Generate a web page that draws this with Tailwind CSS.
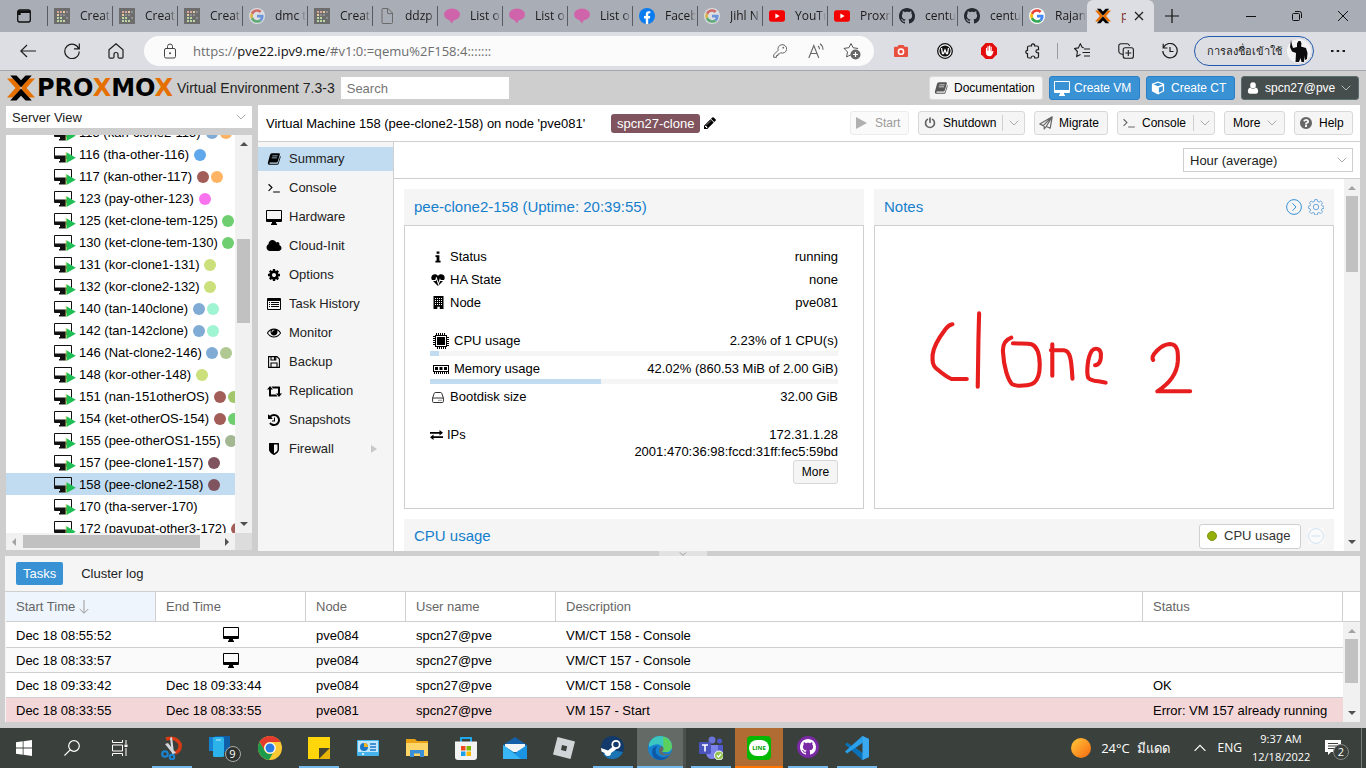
<!DOCTYPE html>
<html lang="en">
<head>
<meta charset="utf-8">
<meta name="viewport" content="width=device-width, initial-scale=1">
<title>pve081 - Proxmox Virtual Environment</title>
<script src="https://cdn.jsdelivr.net/npm/@tailwindcss/browser@4"></script>
</head>
<body class="flex h-screen flex-col overflow-hidden bg-[#cecece] font-['Liberation_Sans',Arial,sans-serif] text-[13px] leading-4 text-black">

<svg class="hidden" aria-hidden="true">
  <symbol id="i-grid" viewBox="0 0 16 16"><rect width="16" height="16" fill="#6d6d6d"/><path fill="#d9a79a" d="M3 3h2v2H3zM6 3h2v2H6z"/><path fill="#e8c9a0" d="M9 3h2v2H9zM3 6h2v2H3z"/><path fill="#b9d8a2" d="M3 9h2v2H3zM6 9h2v2H6zM3 12h2v2H3zM6 12h2v2H6zM9 12h2v2H9z"/><path fill="#8e8e8e" d="M12 3h2v2h-2zM6 6h2v2H6zM9 6h2v2H9zM12 9h2v2h-2z"/></symbol>
  <symbol id="i-google" viewBox="-4 -4 56 56"><circle cx="24" cy="24" r="28" fill="#fff"/><path fill="#EA4335" d="M24 9.500c3.540 0 6.710 1.220 9.210 3.600l6.850-6.850C35.900 2.380 30.470 0 24 0 14.620 0 6.510 5.380 2.560 13.220l7.980 6.190C12.430 13.720 17.740 9.500 24 9.500z"/><path fill="#4285F4" d="M46.980 24.550c0-1.570-.15-3.090-.38-4.550H24v9.020h12.940c-.58 2.960-2.260 5.480-4.780 7.180l7.730 6c4.510-4.180 7.090-10.360 7.090-17.650z"/><path fill="#FBBC05" d="M10.530 28.590c-.48-1.450-.76-2.990-.76-4.590s.27-3.140.76-4.590l-7.980-6.190C.92 16.460 0 20.120 0 24c0 3.880.92 7.540 2.560 10.780l7.970-6.190z"/><path fill="#34A853" d="M24 48c6.480 0 11.930-2.130 15.890-5.810l-7.730-6c-2.150 1.450-4.920 2.300-8.160 2.300-6.260 0-11.570-4.220-13.470-9.910l-7.980 6.190C6.510 42.620 14.620 48 24 48z"/></symbol>
  <symbol id="i-doc" viewBox="0 0 16 16"><path fill="none" stroke="#6b6b6b" d="M3 1.500q0-1 1-1h5l4.500 4.500v9.500q0 1-1 1H4q-1 0-1-1zM8.500.5V5q0 .6.600.6h4.400"/></symbol>
  <symbol id="i-bubble" viewBox="0 0 16 16"><ellipse cx="8" cy="6.500" rx="8" ry="6" fill="#cf64ab"/><path fill="#cf64ab" d="M4 10.500l4 5 2-4z"/></symbol>
  <symbol id="i-fb" viewBox="0 0 16 16"><circle cx="8" cy="8" r="8" fill="#0a7cf0"/><path fill="#fff" d="M6.800 16v-5.600H5V8h1.800V6.300c0-2 1.200-3.100 3-3.100.8 0 1.500.1 1.500.1v2h-.9c-.9 0-1.200.5-1.200 1.100V8h2l-.3 2.400H9.200V16z"/></symbol>
  <symbol id="i-yt" viewBox="0 0 16 16"><rect y="2.300" width="16" height="11.400" rx="2.600" fill="#f50000"/><path fill="#fff" d="M6.400 5.600v4.800L10.600 8z"/></symbol>
  <symbol id="i-gh" viewBox="0 0 16 16"><path fill="currentColor" d="M8 0C3.580 0 0 3.580 0 8c0 3.540 2.290 6.530 5.470 7.590.4.070.55-.17.55-.38 0-.19-.01-.82-.01-1.490-2.010.37-2.530-.49-2.690-.94-.09-.23-.48-.94-.82-1.130-.28-.15-.68-.52-.01-.53.63-.01 1.080.58 1.230.82.72 1.210 1.870.87 2.330.66.07-.52.28-.87.51-1.070-1.780-.2-3.640-.89-3.640-3.950 0-.87.31-1.590.82-2.150-.08-.2-.36-1.020.08-2.120 0 0 .67-.21 2.200.82.64-.18 1.320-.27 2-.27s1.360.09 2 .27c1.530-1.040 2.200-.82 2.200-.82.44 1.100.16 1.920.08 2.120.51.56.82 1.270.82 2.150 0 3.070-1.870 3.750-3.650 3.950.29.25.54.73.54 1.480 0 1.070-.01 1.930-.01 2.200 0 .21.15.46.55.38A8.010 8.010 0 0016 8c0-4.420-3.580-8-8-8z"/></symbol>
  <symbol id="i-px" viewBox="0 0 28 26"><path fill="#e57000" d="M0 3.500h6L15.300 13 6 22.500H0L8.500 13zM28 3.500h-6L12.700 13l9.300 9.500h6L19.500 13z"/><path fill="#000" d="M3.200.5h6.300L14 5.300 18.500.5h6.300L14 12.300zM14 13.700l10.800 11.800h-6.300L14 20.700l-4.500 4.800H3.200z"/></symbol>
  <symbol id="i-desktop" viewBox="0 0 16 15"><path fill="currentColor" fill-rule="evenodd" d="M1 0h14q1 0 1 1v10q0 1-1 1H10v1.500h1V15H5v-1.500h1V12H1q-1 0-1-1V1q0-1 1-1zM1 1v8h14V1z"/></symbol>
  <symbol id="i-vm" viewBox="0 0 22 18"><path fill="#111" fill-rule="evenodd" d="M1 1h16q1 0 1 1v10q0 1-1 1h-5v3.500H5V15h1v-2H1q-1 0-1-1V2q0-1 1-1zM1 2v7.500h16V2z"/><path fill="#e6d66a" d="M11.600 6v11l1-.5V6.500z"/><path fill="#1fbf55" d="M12.500 6.200l9.300 5.500-9.300 5.300z"/></symbol>
  <symbol id="i-chev" viewBox="0 0 10 6"><path fill="none" stroke="currentColor" d="M.7.700L5 5 9.300.7"/></symbol>
  <symbol id="i-book" viewBox="0 0 16 14"><path fill="currentColor" fill-rule="evenodd" d="M5.500.3h8.200q1.500 0 1.100 1.400L12.400 10q-.3 1-1.400 1H3.200q-.9 0-.7.8.2.600 1 .600h8.300q.7 0 .9-.7l2.500-8.200q.8.500.5 1.400L13.400 12.600q-.4 1.200-1.700 1.200H3.300Q.4 13.600.9 11L3.300 2.200Q3.900.5 5.500.3zM6.200 3l-.3.900h6.200l.3-.9zM5.500 5.200l-.3.900h6.200l.3-.9z"/></symbol>
  <symbol id="i-term" viewBox="0 0 16 12"><path fill="none" stroke="currentColor" stroke-width="1.400" d="M1.500 1.500L5.500 5.500 1.500 9.500M7 10.800h8"/></symbol>
  <symbol id="i-cube" viewBox="0 0 16 16"><path fill="currentColor" fill-rule="evenodd" d="M8 .5l7 2.700v8.600L8 15.500l-7-3.700V3.200zM8 2L3 4l5 2 5-2zM9 7.500v6l4.500-2.300V5.700z"/></symbol>
  <symbol id="i-user" viewBox="0 0 12 14"><path fill="currentColor" d="M6 .3a3.300 3.300 0 013.300 3.400A3.300 3.300 0 016 7.200a3.300 3.300 0 01-3.300-3.500A3.300 3.300 0 016 .3zM3 6.500q1.300 1.500 3 1.500t3-1.500q3 .6 3 4.700 0 2.500-2.200 2.500H2.200Q0 13.700 0 11.200 0 7.100 3 6.500z"/></symbol>
  <symbol id="i-power" viewBox="0 0 14 14"><path fill="none" stroke="currentColor" stroke-width="2" stroke-linecap="round" d="M4 2.800a5.200 5.200 0 106 0M7 1.200v5"/></symbol>
  <symbol id="i-plane" viewBox="0 0 14 14"><path fill="none" stroke="currentColor" stroke-width="1.200" stroke-linejoin="round" d="M13.200.8L.8 8l3.400 1.600L13.200.8l-2 11.400-4-1.700-2 2.500V10M13.200.8L7.200 10.500"/></symbol>
  <symbol id="i-help" viewBox="128 128 1536 1536"><path fill="currentColor" d="M1024 1376v-192q0-14-9-23t-23-9h-192q-14 0-23 9t-9 23v192q0 14 9 23t23 9h192q14 0 23-9t9-23zm256-672q0-88-55.500-163t-138.500-116-170-41q-243 0-371 213-15 24 8 42l132 100q7 6 19 6 16 0 25-12 53-68 86-92 34-24 86-24 48 0 85.500 26t37.500 59q0 38-20 61t-68 45q-63 28-115.500 86.500t-52.500 125.500v36q0 14 9 23t23 9h192q14 0 23-9t9-23q0-19 21.500-49.500t54.500-49.500q32-18 49-28.500t46-35 44.500-48 28-60.500 12.500-81zm384 192q0 209-103 385.500t-279.500 279.500-385.500 103-385.500-103-279.500-279.500-103-385.500 103-385.500 279.500-279.500 385.500-103 385.500 103 279.500 279.500 103 385.500z"/></symbol>
  <symbol id="i-pencil" viewBox="128 128 1536 1536"><path fill="currentColor" d="M491 1536l91-91-235-235-91 91v107h128v128h107zm523-928q0-22-22-22-10 0-17 7l-542 542q-7 7-7 17 0 22 22 22 10 0 17-7l542-542q7-7 7-17zm-54-192l416 416-832 832h-416v-416zm683 96q0 53-37 90l-166 166-416-416 166-165q36-38 90-38 53 0 91 38l235 234q37 39 37 91z"/></symbol>
  <symbol id="i-cloud" viewBox="0 128 2048 1536"><path fill="currentColor" d="M1984 1152q0 159-112.500 271.500t-271.500 112.500h-1088q-185 0-316.500-131.500t-131.500-316.500q0-132 71-241.500t187-163.500q-2-28-2-43 0-212 150-362t362-150q158 0 286.500 88t187.500 230q70-62 166-62 106 0 181 75t75 181q0 75-41 138 129 30 213 134.500t84 239.500z"/></symbol>
  <symbol id="i-cog" viewBox="128 128 1536 1536"><path fill="currentColor" d="M1152 896q0-106-75-181t-181-75-181 75-75 181 75 181 181 75 181-75 75-181zm512-109v222q0 12-8 23t-20 13l-185 28q-19 54-39 91 35 50 107 138 10 12 10 25t-9 23q-27 37-99 108t-94 71q-12 0-26-9l-138-108q-44 23-91 38-16 136-29 186-7 28-36 28h-222q-14 0-24.500-8.500t-11.500-21.500l-28-184q-49-16-90-37l-141 107q-10 9-25 9-14 0-25-11-126-114-165-168-7-10-7-23 0-12 8-23 15-21 51-66.500t54-70.500q-27-50-41-99l-183-27q-13-2-21-12.500t-8-23.500v-222q0-12 8-23t19-13l186-28q14-46 39-92-40-57-107-138-10-12-10-24 0-10 9-23 26-36 98.500-107.500t94.500-71.500q13 0 26 10l138 107q44-23 91-38 16-136 29-186 7-28 36-28h222q14 0 24.500 8.500t11.500 21.500l28 184q49 16 90 37l142-107q9-9 24-9 13 0 25 10 129 119 165 170 7 8 7 22 0 12-8 23-15 21-51 66.500t-54 70.500q26 50 41 98l183 28q13 2 21 12.500t8 23.500z"/></symbol>
  <symbol id="i-list" viewBox="0 0 14 12"><path fill="currentColor" fill-rule="evenodd" d="M1 0h12q1 0 1 1v10q0 1-1 1H1q-1 0-1-1V1q0-1 1-1zM1 3v8h12V3zM2 4h1v1H2zM4 4h8v1H4zM2 6h1v1H2zM4 6h8v1H4zM2 8h1v1H2zM4 8h8v1H4z"/></symbol>
  <symbol id="i-eye" viewBox="0 384 1792 1152"><path fill="currentColor" d="M1664 960q-152-236-381-353 61 104 61 225 0 185-131.500 316.500t-316.500 131.500-316.500-131.500-131.500-316.500q0-121 61-225-229 117-381 353 133 205 333.500 326.500t434.500 121.500 434.500-121.500 333.500-326.500zm-720-384q0-20-14-34t-34-14q-125 0-214.500 89.500t-89.500 214.500q0 20 14 34t34 14 34-14 14-34q0-86 61-147t147-61q20 0 34-14t14-34zm848 384q0 34-20 69-140 230-376.500 368.500t-499.500 138.500-499.500-139-376.500-368q-20-35-20-69t20-69q140-229 376.500-368t499.500-139 499.500 139 376.500 368q20 35 20 69z"/></symbol>
  <symbol id="i-save" viewBox="0 0 12 12"><path fill="none" stroke="currentColor" stroke-width="1.100" d="M.6.600H9L11.400 3v8.400H.6zM3 11V7h6v4M3 1v3h4.800V1M6.500 1v2.500"/></symbol>
  <symbol id="i-retweet" viewBox="0 0 15 11"><path fill="currentColor" d="M3 0l3 3.600H4v5h5l1.500 2H2.600Q2 10.600 2 10V3.600H0zM12 11L9 7.400h2v-5H6L4.500.400h7.900Q13 .4 13 1v6.400h2z"/></symbol>
  <symbol id="i-history" viewBox="128 128 1536 1536"><path fill="currentColor" d="M1664 896q0 156-61 298t-164 245-245 164-298 61q-172 0-327-72.500t-264-204.500q-7-10-6.500-22.500t8.500-20.500l137-138q10-9 25-9 16 2 23 12 73 95 179 147t225 52q104 0 198.500-40.500t163.500-109.500 109.500-163.500 40.500-198.500-40.500-198.500-109.500-163.500-163.500-109.500-198.500-40.500q-98 0-188 35.500t-160 101.500l137 138q31 30 14 69-17 40-59 40h-448q-26 0-45-19t-19-45v-448q0-42 40-59 39-17 69 14l130 129q107-101 244.500-156.500t284.500-55.500q156 0 298 61t245 164 164 245 61 298zm-640-288v448q0 14-9 23t-23 9h-320q-14 0-23-9t-9-23v-64q0-14 9-23t23-9h224v-352q0-14 9-23t23-9h64q14 0 23 9t9 23z"/></symbol>
  <symbol id="i-shield" viewBox="128 128 1536 1536"><path fill="currentColor" d="M1344 960v-640h-448v1137q119-63 213-137 235-184 235-360zm192-768v768q0 86-33.500 170.500t-83 150-118 127.500-126.500 103-121 77.500-89.500 49.500-42.500 20q-12 6-26 6t-26-6q-16-7-42.500-20t-89.500-49.500-121-77.500-126.500-103-118-127.500-83-150-33.500-170.500v-768q0-26 19-45t45-19h1152q26 0 45 19t19 45z"/></symbol>
  <symbol id="i-info" viewBox="0 0 6 12"><path fill="currentColor" d="M1.600.5h2.800v2.300H1.600zM.5 4.200h3.900v5.600h1.200v1.700H.4V9.800h1.200V5.900H.5z"/></symbol>
  <symbol id="i-heart" viewBox="0 0 14 12"><path fill="currentColor" d="M7 2C8-.2 11-.3 12.500 1 14 2.500 14 4.500 13 6H9.800l-.9-1.800L7.400 8.800 5.400 2.600 4.200 6H1C0 4.500 0 2.500 1.500 1 3-.3 6-.2 7 2zM2 7h2.900l.5-1.400 2 6.100 1.700-5L9.300 7H12L7 12z"/></symbol>
  <symbol id="i-building" viewBox="0 0 11 13"><path fill="currentColor" fill-rule="evenodd" d="M.5 0h10v13H6.800v-2.200H4.300V13H.5zM2 2v1h1V2zM4 2v1h1V2zM6 2v1h1V2zM8 2v1h1V2zM2 4v1h1V4zM4 4v1h1V4zM6 4v1h1V4zM8 4v1h1V4zM2 6v1h1V6zM4 6v1h1V6zM6 6v1h1V6zM8 6v1h1V6zM2 8v1h1V8zM4 8v1h1V8zM6 8v1h1V8zM8 8v1h1V8z"/></symbol>
  <symbol id="i-cpu" viewBox="0 0 16 16"><path fill="currentColor" fill-rule="evenodd" d="M2 2h12v12H2zM3 3v10h10V3zM4 4h8v8H4zM3 0h1v2H3zM5 0h1v2H5zM7 0h1v2H7zM9 0h1v2H9zM11 0h1v2h-1zM4 14h1v2H4zM6 14h1v2H6zM8 14h1v2H8zM10 14h1v2h-1zM12 14h1v2h-1zM0 3h2v1H0zM0 5h2v1H0zM0 7h2v1H0zM0 9h2v1H0zM0 11h2v1H0zM14 4h2v1h-2zM14 6h2v1h-2zM14 8h2v1h-2zM14 10h2v1h-2zM14 12h2v1h-2z"/></symbol>
  <symbol id="i-mem" viewBox="0 0 16 9"><path fill="currentColor" fill-rule="evenodd" d="M0 0h16v7H0zM1 1v5h14V1zM2 2h3v3H2zM6.500 2h3v3h-3zM11 2h3v3h-3zM1 7h1v2H1zM3 7h1v2H3zM5 7h1v2H5zM7 7h1v2H7zM9 7h1v2H9zM11 7h1v2h-1zM13 7h1v2h-1zM15 7h1v2h-1z"/></symbol>
  <symbol id="i-hdd" viewBox="0 0 12 11"><path fill="none" stroke="currentColor" d="M.6 6L2.300 1.200Q2.600.5 3.200.5h5.600q.6 0 .9.700L11.400 6v3.500q0 1-1 1H1.600q-1 0-1-1zH11.400"/><path stroke="currentColor" d="M6.500 8.300h1M8.500 8.300h1"/></symbol>
  <symbol id="i-exch" viewBox="0 0 13 10"><path fill="currentColor" d="M0 2h9.500V0L13 2.800 9.500 5.500V3.700H0zM13 6.200H3.500V4.500L0 7.200 3.500 10V8h9.500z"/></symbol>
  <symbol id="i-up" viewBox="0 0 8 4"><path fill="currentColor" d="M0 4L4 0l4 4z"/></symbol>
  <symbol id="i-down" viewBox="0 0 8 4"><path fill="currentColor" d="M0 0l4 4 4-4z"/></symbol>
</svg>

<!-- Browser tab strip -->
<div class="flex h-8 shrink-0 overflow-hidden bg-[#a9adb5] font-['Open_Sans','Noto_Sans',sans-serif] text-[12px] text-[#1b1b1b]">
  <button class="flex w-[47px] shrink-0 items-center justify-center" aria-label="Tab actions"><svg class="h-4 w-4" viewBox="0 0 16 16"><rect x="1.700" y="2" width="12.600" height="12" rx="2" fill="none" stroke="#111" stroke-width="1.300"/><path fill="#111" d="M1.700 2.500h12.600V5H1.700zM1.700 5h3v2h-3z"/></svg></button>
  <nav class="flex" aria-label="Open tabs">
    <a href="#" class="flex w-[65px] items-center"><i class="h-5 w-px bg-[#595b61]"></i><svg class="ml-1.5 h-4 w-4"><use href="#i-grid"/></svg><span class="ml-2.5 w-[31px] overflow-hidden whitespace-nowrap [mask-image:linear-gradient(90deg,#000_75%,transparent)]">Creat</span></a>
    <a href="#" class="flex w-[65px] items-center"><i class="h-5 w-px bg-[#595b61]"></i><svg class="ml-1.5 h-4 w-4"><use href="#i-grid"/></svg><span class="ml-2.5 w-[31px] overflow-hidden whitespace-nowrap [mask-image:linear-gradient(90deg,#000_75%,transparent)]">Creat</span></a>
    <a href="#" class="flex w-[65px] items-center"><i class="h-5 w-px bg-[#595b61]"></i><svg class="ml-1.5 h-4 w-4"><use href="#i-grid"/></svg><span class="ml-2.5 w-[31px] overflow-hidden whitespace-nowrap [mask-image:linear-gradient(90deg,#000_75%,transparent)]">Creat</span></a>
    <a href="#" class="flex w-[65px] items-center"><i class="h-5 w-px bg-[#595b61]"></i><svg class="ml-1.5 h-4 w-4 opacity-60"><use href="#i-google"/></svg><span class="ml-2.5 w-[31px] overflow-hidden whitespace-nowrap [mask-image:linear-gradient(90deg,#000_75%,transparent)]">dmc t</span></a>
    <a href="#" class="flex w-[65px] items-center"><i class="h-5 w-px bg-[#595b61]"></i><svg class="ml-1.5 h-4 w-4"><use href="#i-grid"/></svg><span class="ml-2.5 w-[31px] overflow-hidden whitespace-nowrap [mask-image:linear-gradient(90deg,#000_75%,transparent)]">Creat</span></a>
    <a href="#" class="flex w-[65px] items-center"><i class="h-5 w-px bg-[#595b61]"></i><svg class="ml-1.5 h-4 w-4"><use href="#i-doc"/></svg><span class="ml-2.5 w-[31px] overflow-hidden whitespace-nowrap [mask-image:linear-gradient(90deg,#000_75%,transparent)]">ddzp</span></a>
    <a href="#" class="flex w-[65px] items-center"><i class="h-5 w-px bg-[#595b61]"></i><svg class="ml-1.5 h-4 w-4"><use href="#i-bubble"/></svg><span class="ml-2.5 w-[31px] overflow-hidden whitespace-nowrap [mask-image:linear-gradient(90deg,#000_75%,transparent)]">List o</span></a>
    <a href="#" class="flex w-[65px] items-center"><i class="h-5 w-px bg-[#595b61]"></i><svg class="ml-1.5 h-4 w-4"><use href="#i-bubble"/></svg><span class="ml-2.5 w-[31px] overflow-hidden whitespace-nowrap [mask-image:linear-gradient(90deg,#000_75%,transparent)]">List o</span></a>
    <a href="#" class="flex w-[65px] items-center"><i class="h-5 w-px bg-[#595b61]"></i><svg class="ml-1.5 h-4 w-4"><use href="#i-bubble"/></svg><span class="ml-2.5 w-[31px] overflow-hidden whitespace-nowrap [mask-image:linear-gradient(90deg,#000_75%,transparent)]">List o</span></a>
    <a href="#" class="flex w-[65px] items-center"><i class="h-5 w-px bg-[#595b61]"></i><svg class="ml-1.5 h-4 w-4"><use href="#i-fb"/></svg><span class="ml-2.5 w-[31px] overflow-hidden whitespace-nowrap [mask-image:linear-gradient(90deg,#000_75%,transparent)]">Faceb</span></a>
    <a href="#" class="flex w-[65px] items-center"><i class="h-5 w-px bg-[#595b61]"></i><svg class="ml-1.5 h-4 w-4 opacity-60"><use href="#i-google"/></svg><span class="ml-2.5 w-[31px] overflow-hidden whitespace-nowrap [mask-image:linear-gradient(90deg,#000_75%,transparent)]">Jihl N</span></a>
    <a href="#" class="flex w-[65px] items-center"><i class="h-5 w-px bg-[#595b61]"></i><svg class="ml-1.5 h-4 w-4"><use href="#i-yt"/></svg><span class="ml-2.5 w-[31px] overflow-hidden whitespace-nowrap [mask-image:linear-gradient(90deg,#000_75%,transparent)]">YouTu</span></a>
    <a href="#" class="flex w-[65px] items-center"><i class="h-5 w-px bg-[#595b61]"></i><svg class="ml-1.5 h-4 w-4"><use href="#i-yt"/></svg><span class="ml-2.5 w-[31px] overflow-hidden whitespace-nowrap [mask-image:linear-gradient(90deg,#000_75%,transparent)]">Proxm</span></a>
    <a href="#" class="flex w-[65px] items-center"><i class="h-5 w-px bg-[#595b61]"></i><svg class="ml-1.5 h-4 w-4 text-[#24292f]"><use href="#i-gh"/></svg><span class="ml-2.5 w-[31px] overflow-hidden whitespace-nowrap [mask-image:linear-gradient(90deg,#000_75%,transparent)]">centu</span></a>
    <a href="#" class="flex w-[65px] items-center"><i class="h-5 w-px bg-[#595b61]"></i><svg class="ml-1.5 h-4 w-4 text-[#24292f]"><use href="#i-gh"/></svg><span class="ml-2.5 w-[31px] overflow-hidden whitespace-nowrap [mask-image:linear-gradient(90deg,#000_75%,transparent)]">centu</span></a>
    <a href="#" class="flex w-[65px] items-center"><i class="h-5 w-px bg-[#595b61]"></i><svg class="ml-1.5 h-4 w-4"><use href="#i-google"/></svg><span class="ml-2.5 w-[31px] overflow-hidden whitespace-nowrap [mask-image:linear-gradient(90deg,#000_75%,transparent)]">Rajan</span></a>
    <a href="#" aria-current="page" class="flex w-[67px] items-center rounded-t-md bg-[#dddee3] pl-2"><svg class="h-4 w-4"><use href="#i-px"/></svg><span class="ml-2.5 w-[5px] overflow-hidden text-[#7d3434]">p</span><svg class="ml-2 h-2.5 w-2.5" viewBox="0 0 10 10"><path stroke="#222" stroke-width="1.300" d="M1 1l8 8M9 1L1 9"/></svg></a>
  </nav>
  <button class="flex w-9 items-center justify-center" aria-label="New tab"><svg class="h-3.5 w-3.5" viewBox="0 0 14 14"><path stroke="#111" stroke-width="1.200" d="M7 0v14M0 7h14"/></svg></button>
  <div class="ml-auto flex">
    <button class="flex w-[46px] items-center justify-center" aria-label="Minimize"><svg class="h-2.5 w-2.5" viewBox="0 0 10 10"><path stroke="#111" d="M0 5.500h10"/></svg></button>
    <button class="flex w-[46px] items-center justify-center" aria-label="Restore"><svg class="h-2.5 w-2.5" viewBox="0 0 10 10"><path fill="none" stroke="#111" d="M.5 3.500q0-1 1-1h5q1 0 1 1v5q0 1-1 1h-5q-1 0-1-1zM3 .5h4.500q2 0 2 2V7"/></svg></button>
    <button class="flex w-[46px] items-center justify-center" aria-label="Close"><svg class="h-2.5 w-2.5" viewBox="0 0 10 10"><path stroke="#111" d="M0 0l10 10M10 0L0 10"/></svg></button>
  </div>
</div>

<!-- Browser toolbar -->
<div class="flex h-[39px] shrink-0 items-center border-b border-[#a6a5ae] bg-[#dddee3] pl-1.5 font-['Open_Sans','Noto_Sans',sans-serif] text-[#1b1b1b]">
  <button class="flex w-11 shrink-0 justify-center" aria-label="Back"><svg class="h-4 w-4" viewBox="0 0 16 16"><path fill="none" stroke="currentColor" stroke-width="1.200" d="M16 8H.8M7 2L.8 8 7 14"/></svg></button>
  <button class="flex w-11 shrink-0 justify-center" aria-label="Refresh"><svg class="h-4 w-4" viewBox="0 0 16 16"><path fill="none" stroke="currentColor" stroke-width="1.200" d="M14.800 6A7.200 7.200 0 1015.200 8.500M15.300.5V5.800H10"/></svg></button>
  <button class="flex w-11 shrink-0 justify-center" aria-label="Home"><svg class="h-4 w-4" viewBox="0 0 16 16"><path fill="none" stroke="currentColor" stroke-width="1.200" d="M1 6.700L8 .8l7 5.900V14q0 1.200-1.200 1.200H11.500Q10 15.200 10 14v-2.500q0-2-2-2t-2 2V14q0 1.200-1.500 1.200H2.200Q1 15.200 1 14z"/></svg></button>
  <div class="ml-1.5 flex h-[30px] min-w-0 flex-1 items-center rounded-full bg-[#fbfbfc] pl-[19px]">
    <svg class="h-4 w-3.5" viewBox="0 0 14 16"><path fill="none" stroke="#444" d="M2.500 5.500h8.500q1.500 0 1.500 1.500v6.500q0 1.500-1.500 1.500H3q-1.500 0-1.500-1.500V7q0-1.500 1.500-1.500M4.500 5.500V3.500q0-2.500 2.500-2.500t2.500 2.500v2"/><circle cx="7" cy="10.200" r="1" fill="#444"/></svg>
    <div class="ml-4 flex-1 truncate text-[13px] text-[#6d6d6d]">https://<span class="text-[#111]">pve22.ipv9.me</span>/#v1:0:=qemu%2F158:4:::::::</div>
    <button class="flex w-9 justify-center" aria-label="Saved passwords"><svg class="h-3.5 w-3.5" viewBox="0 0 14 14"><path fill="none" stroke="#666" d="M9 .7a4.200 4.200 0 11-1.300 8L6.500 10H5v1.500H3.500v1.800H.7v-2.500l4.500-4.500A4.200 4.200 0 019 .7z"/><circle cx="10.300" cy="3.700" r=".9" fill="#666"/></svg></button>
    <button class="flex w-9 justify-center" aria-label="Read aloud"><svg class="h-4 w-4" viewBox="0 0 16 16"><path fill="none" stroke="#666" stroke-width="1.100" d="M.8 15L5.800 2.500 10.800 15M2.600 10.500h6.400M10 3q1.500 1.200 1.500 3.200M12 .8q3 2 3 6"/></svg></button>
    <button class="mr-1 flex w-9 justify-center" aria-label="Add to favorites"><svg class="h-[18px] w-[18px]" viewBox="0 0 18 18"><path fill="none" stroke="#555" d="M8 1.500l2.100 4.200 5 .8M8 1.500L5.900 5.700 1 6.400l3.500 3.500-.9 5 4.400-2.200"/><circle cx="12.500" cy="12.500" r="5" fill="#666"/><path stroke="#fff" stroke-width="1.200" d="M12.500 10v5M10 12.500h5"/></svg></button>
  </div>
  <div class="ml-[5px] flex shrink-0 items-center">
    <button class="flex w-11 justify-center" aria-label="Screenshot"><svg class="h-3 w-3.5" viewBox="0 0 14 12"><path fill="#e94f3e" d="M4.500 0h5l1 1.700H13q1 0 1 1V11q0 1-1 1H1q-1 0-1-1V2.700q0-1 1-1h2.500z"/><circle cx="7" cy="6.700" r="2.600" fill="none" stroke="#fff" stroke-width="1.500"/></svg></button>
    <button class="flex w-11 justify-center" aria-label="Extension"><svg class="h-4 w-4" viewBox="0 0 16 16"><circle cx="8" cy="8" r="7.300" fill="#fff" stroke="#111" stroke-width="1.300"/><circle cx="8" cy="8" r="5.600" fill="#111"/><path fill="none" stroke="#fff" stroke-width="1.300" d="M4.500 5l1 5.500h1L8 7l1.500 3.500h1l1-5.500"/></svg></button>
    <button class="flex w-11 justify-center" aria-label="Ad blocker"><svg class="h-4 w-4" viewBox="0 0 16 16"><path fill="#e40d0d" d="M4.700 0h6.600L16 4.700v6.600L11.300 16H4.700L0 11.300V4.700z"/><path fill="#fff" d="M5 5q.8-.6 1 .2V8h.4V3.500q.7-.8 1.200 0V7.500H8V2.800q.7-.7 1.200 0v4.700h.4V3.700q.7-.6 1.100.2v5l1-1.200q.9-.1.7.8Q11.500 13 8.700 13.300 5 13.300 4.800 9z"/></svg></button>
    <button class="flex w-11 justify-center" aria-label="Extensions"><svg class="h-4 w-4" viewBox="0 0 16 16"><path fill="none" stroke="currentColor" stroke-width="1.200" d="M4 3h2.500Q6.300.8 8 .8T9.700 3H12q1.500 0 1.500 1.500v2.200Q11 6.500 11 8.300t2.500 1.600v3.600q0 1.500-1.500 1.500H9.800Q9.800 13 8 13t-2 2H4q-1.500 0-1.500-1.500v-3Q.8 10.500.8 9q0-1.600 1.700-1.600V4.500Q2.500 3 4 3z"/></svg></button>
    <i class="mx-0.5 h-4 w-px bg-[#9a9aa0]"></i>
    <button class="flex w-11 justify-center" aria-label="Favorites"><svg class="h-4 w-4" viewBox="0 0 16 16"><path fill="none" stroke="currentColor" stroke-width="1.100" d="M10 4.800L8.300 4.500 6.300.8 4.300 4.900.6 5.500l2.800 3-.7 5L6.500 11.600M10 6h6M8.500 9.500H16M10 13h6"/></svg></button>
    <button class="flex w-11 justify-center" aria-label="Collections"><svg class="h-4 w-4" viewBox="0 0 16 16"><rect x="5.200" y="4.700" width="10.200" height="10.600" rx="2" fill="none" stroke="currentColor" stroke-width="1.100"/><path fill="none" stroke="currentColor" stroke-width="1.100" d="M10.300 7v6M7.300 10h6M5 11.500L2.500 10.700Q1 10 .8 8.500V3Q.8.700 3 .700h6.500Q11 .7 11.500 3"/></svg></button>
    <button class="flex w-11 justify-center" aria-label="History"><svg class="h-4 w-4" viewBox="0 0 16 16"><path fill="none" stroke="currentColor" stroke-width="1.200" d="M1.500 4.500A7.200 7.200 0 11.800 8M1.200.8V5h4.300M8 4v4.500h3.500"/></svg></button>
    <button class="ml-0.5 flex h-[30px] w-[120px] items-center justify-between rounded-full border border-[#2359ad] pl-3 pr-0.5 text-[11px] whitespace-nowrap">การลงชื่อเข้าใช้<svg class="h-6 w-6 shrink-0" viewBox="0 0 24 24"><circle cx="12" cy="12" r="12" fill="#f4f4f4"/><path fill="#0c0c0c" d="M4 1l1 5 1 3 4-1V4.500L11.500 2h2l1 2.500-.5 3 5 1.500 1.500 5-.5 6-2 1-.5-4-.5 6h-2.500l-1-4-1.500 4H8.500L9 14l-4-1.500L3 8z"/></svg></button>
    <button class="mr-1.5 ml-0.5 flex w-11 justify-center" aria-label="Settings and more"><svg class="h-1 w-3.5" viewBox="0 0 14 4"><path fill="currentColor" d="M0 1h2.500v2H0zM5.700 1h2.500v2H5.700zM11.500 1H14v2h-2.500z"/></svg></button>
  </div>
</div>

<!-- Proxmox header -->
<header class="flex h-[34px] shrink-0 items-center pl-[7px] pr-[7px]">
  <svg class="h-[26px] w-7 shrink-0"><use href="#i-px"/></svg>
  <span class="ml-0.5 w-[138px] font-['DejaVu_Sans',sans-serif] text-[24px] leading-6 font-bold">PRO<span class="text-[#e57000]">X</span>MO<span class="text-[#e57000]">X</span></span>
  <span class="ml-0.5 text-[14px] whitespace-nowrap text-[#222]">Virtual Environment 7.3-3</span>
  <input type="search" aria-label="Search" placeholder="Search" class="ml-1.5 h-[22px] w-[168px] bg-white px-1.5 outline-none placeholder:text-[#757575]">
  <div class="ml-auto flex gap-1.5 text-[12px] whitespace-nowrap">
    <button class="flex h-6 w-[114px] items-center gap-1.5 rounded-[3px] border border-[#dcdcdc] bg-[#f5f5f5] pl-1"><svg class="h-3 w-3.5 text-[#555]"><use href="#i-book"/></svg>Documentation</button>
    <button class="flex h-6 w-[91px] items-center gap-1 rounded-[3px] border border-[#2a80c8] bg-[#3892d4] pl-1 text-white"><svg class="h-[15px] w-4"><use href="#i-desktop"/></svg>Create VM</button>
    <button class="flex h-6 w-[89px] items-center gap-1.5 rounded-[3px] border border-[#2a80c8] bg-[#3892d4] pl-1 text-white"><svg class="h-3.5 w-3.5"><use href="#i-cube"/></svg>Create CT</button>
    <button class="flex h-6 w-[118px] items-center rounded-[3px] border border-[#5a7070] bg-[#464d4d] pl-[5px] text-white"><svg class="h-3 w-3"><use href="#i-user"/></svg><span class="mx-1.5">spcn27@pve</span><svg class="h-1.5 w-2.5 text-[#b8b8b8]"><use href="#i-chev"/></svg></button>
  </div>
</header>

<div class="flex min-h-0 flex-1 gap-1.5 pl-1.5 pr-1.5">
  <!-- Resource tree -->
  <aside class="flex w-[246px] shrink-0 flex-col pt-px">
    <div class="relative h-[22px] shrink-0">
      <select aria-label="View" class="h-[22px] w-full appearance-none bg-white pt-0.5 pl-1.5 text-[13px] text-[#222]"><option>Server View</option></select>
      <svg class="pointer-events-none absolute top-2 right-1.5 h-1.5 w-2.5 text-[#aaa]"><use href="#i-chev"/></svg>
    </div>
    <div class="mt-[7px] mb-px flex min-h-0 flex-1 flex-col">
      <div class="flex min-h-0 flex-1">
        <div class="flex min-w-0 flex-1 flex-col overflow-hidden bg-white">
          <ul class="-mt-3.5 whitespace-nowrap">
            <li class="flex h-[22px] items-center pt-0.5 pl-12"><svg class="mr-[3px] h-[18px] w-[22px] shrink-0"><use href="#i-vm"/></svg>115 (kan-clone2-115)<span class="ml-[5px] flex gap-0.5"><i class="h-3 w-3 rounded-full bg-[#7fabd4]"></i><i class="h-3 w-3 rounded-full bg-[#ffb465]"></i></span></li>
            <li class="flex h-[22px] items-center pt-0.5 pl-12"><svg class="mr-[3px] h-[18px] w-[22px] shrink-0"><use href="#i-vm"/></svg>116 (tha-other-116)<span class="ml-[5px] flex gap-0.5"><i class="h-3 w-3 rounded-full bg-[#5fa8ec]"></i></span></li>
            <li class="flex h-[22px] items-center pt-0.5 pl-12"><svg class="mr-[3px] h-[18px] w-[22px] shrink-0"><use href="#i-vm"/></svg>117 (kan-other-117)<span class="ml-[5px] flex gap-0.5"><i class="h-3 w-3 rounded-full bg-[#a35d59]"></i><i class="h-3 w-3 rounded-full bg-[#ffb465]"></i></span></li>
            <li class="flex h-[22px] items-center pt-0.5 pl-12"><svg class="mr-[3px] h-[18px] w-[22px] shrink-0"><use href="#i-vm"/></svg>123 (pay-other-123)<span class="ml-[5px] flex gap-0.5"><i class="h-3 w-3 rounded-full bg-[#f973ef]"></i></span></li>
            <li class="flex h-[22px] items-center pt-0.5 pl-12"><svg class="mr-[3px] h-[18px] w-[22px] shrink-0"><use href="#i-vm"/></svg>125 (ket-clone-tem-125)<span class="ml-1 flex gap-0.5"><i class="h-3 w-3 rounded-full bg-[#6fcf70]"></i></span></li>
            <li class="flex h-[22px] items-center pt-0.5 pl-12"><svg class="mr-[3px] h-[18px] w-[22px] shrink-0"><use href="#i-vm"/></svg>130 (ket-clone-tem-130)<span class="ml-1 flex gap-0.5"><i class="h-3 w-3 rounded-full bg-[#6fcf70]"></i></span></li>
            <li class="flex h-[22px] items-center pt-0.5 pl-12"><svg class="mr-[3px] h-[18px] w-[22px] shrink-0"><use href="#i-vm"/></svg>131 (kor-clone1-131)<span class="ml-1 flex gap-0.5"><i class="h-3 w-3 rounded-full bg-[#cbdf7a]"></i></span></li>
            <li class="flex h-[22px] items-center pt-0.5 pl-12"><svg class="mr-[3px] h-[18px] w-[22px] shrink-0"><use href="#i-vm"/></svg>132 (kor-clone2-132)<span class="ml-1 flex gap-0.5"><i class="h-3 w-3 rounded-full bg-[#cbdf7a]"></i></span></li>
            <li class="flex h-[22px] items-center pt-0.5 pl-12"><svg class="mr-[3px] h-[18px] w-[22px] shrink-0"><use href="#i-vm"/></svg>140 (tan-140clone)<span class="ml-[5px] flex gap-0.5"><i class="h-3 w-3 rounded-full bg-[#7fabd4]"></i><i class="h-3 w-3 rounded-full bg-[#9ff5d2]"></i></span></li>
            <li class="flex h-[22px] items-center pt-0.5 pl-12"><svg class="mr-[3px] h-[18px] w-[22px] shrink-0"><use href="#i-vm"/></svg>142 (tan-142clone)<span class="ml-[5px] flex gap-0.5"><i class="h-3 w-3 rounded-full bg-[#7fabd4]"></i><i class="h-3 w-3 rounded-full bg-[#9ff5d2]"></i></span></li>
            <li class="flex h-[22px] items-center pt-0.5 pl-12"><svg class="mr-[3px] h-[18px] w-[22px] shrink-0"><use href="#i-vm"/></svg>146 (Nat-clone2-146)<span class="ml-1 flex gap-0.5"><i class="h-3 w-3 rounded-full bg-[#7fabd4]"></i><i class="h-3 w-3 rounded-full bg-[#b0c891]"></i></span></li>
            <li class="flex h-[22px] items-center pt-0.5 pl-12"><svg class="mr-[3px] h-[18px] w-[22px] shrink-0"><use href="#i-vm"/></svg>148 (kor-other-148)<span class="ml-[5px] flex gap-0.5"><i class="h-3 w-3 rounded-full bg-[#cbdf7a]"></i></span></li>
            <li class="flex h-[22px] items-center pt-0.5 pl-12"><svg class="mr-[3px] h-[18px] w-[22px] shrink-0"><use href="#i-vm"/></svg>151 (nan-151otherOS)<span class="ml-[5px] flex gap-0.5"><i class="h-3 w-3 rounded-full bg-[#a35d59]"></i><i class="h-3 w-3 rounded-full bg-[#a3c66c]"></i></span></li>
            <li class="flex h-[22px] items-center pt-0.5 pl-12"><svg class="mr-[3px] h-[18px] w-[22px] shrink-0"><use href="#i-vm"/></svg>154 (ket-otherOS-154)<span class="ml-[5px] flex gap-0.5"><i class="h-3 w-3 rounded-full bg-[#a35d59]"></i><i class="h-3 w-3 rounded-full bg-[#6fcf70]"></i></span></li>
            <li class="flex h-[22px] items-center pt-0.5 pl-12"><svg class="mr-[3px] h-[18px] w-[22px] shrink-0"><use href="#i-vm"/></svg>155 (pee-otherOS1-155)<span class="ml-1 flex gap-0.5"><i class="h-3 w-3 rounded-full bg-[#a3b892]"></i></span></li>
            <li class="flex h-[22px] items-center pt-0.5 pl-12"><svg class="mr-[3px] h-[18px] w-[22px] shrink-0"><use href="#i-vm"/></svg>157 (pee-clone1-157)<span class="ml-[5px] flex gap-0.5"><i class="h-3 w-3 rounded-full bg-[#7f545e]"></i></span></li>
            <li class="flex h-[22px] items-center bg-[#c1dcf1] pt-0.5 pl-12"><svg class="mr-[3px] h-[18px] w-[22px] shrink-0"><use href="#i-vm"/></svg>158 (pee-clone2-158)<span class="ml-[5px] flex gap-0.5"><i class="h-3 w-3 rounded-full bg-[#7f545e]"></i></span></li>
            <li class="flex h-[22px] items-center pt-0.5 pl-12"><svg class="mr-[3px] h-[18px] w-[22px] shrink-0"><use href="#i-vm"/></svg>170 (tha-server-170)</li>
            <li class="flex h-[22px] items-center pt-0.5 pl-12"><svg class="mr-[3px] h-[18px] w-[22px] shrink-0"><use href="#i-vm"/></svg>172 (payupat-other3-172)<span class="ml-[5px] flex gap-0.5"><i class="h-3 w-3 rounded-full bg-[#a35d59]"></i></span></li>
          </ul>
        </div>
        <div class="flex w-[17px] flex-col items-center bg-[#f1f1f1] py-[7px]">
          <svg class="h-1 w-2 shrink-0 text-[#505050]"><use href="#i-up"/></svg>
          <div class="mt-[93px] h-[84px] w-[13px] bg-[#c1c1c1]"></div>
          <svg class="mt-auto h-1 w-2 shrink-0 text-[#505050]"><use href="#i-down"/></svg>
        </div>
      </div>
      <div class="flex h-[17px] shrink-0">
        <div class="flex flex-1 items-center bg-[#f1f1f1] px-1.5">
          <svg class="h-2 w-1" viewBox="0 0 4 8"><path fill="#a3a3a3" d="M4 0v8L0 4z"/></svg>
          <div class="ml-[7px] h-[13px] w-[177px] bg-[#c1c1c1]"></div>
          <svg class="ml-auto h-2 w-1" viewBox="0 0 4 8"><path fill="#505050" d="M0 0v8l4-4z"/></svg>
        </div>
        <div class="w-[17px] bg-[#dcdcdc]"></div>
      </div>
    </div>
  </aside>

  <!-- Virtual machine view -->
  <main class="flex min-w-0 flex-1 flex-col bg-white">
    <div class="flex h-[37px] shrink-0 items-center border-b border-[#cfcfcf] pl-2 pr-[7px]">
      <h1 class="pt-0.5 whitespace-nowrap">Virtual Machine 158 (pee-clone2-158) on node 'pve081'</h1>
      <span class="ml-[26px] rounded-[3px] bg-[#7f545e] px-1.5 py-px leading-[17px] text-white">spcn27-clone</span>
      <button class="ml-1" aria-label="Edit tags"><svg class="h-3 w-3"><use href="#i-pencil"/></svg></button>
      <div class="ml-auto flex gap-[9px] text-[12px] whitespace-nowrap">
        <button disabled class="flex h-6 w-[59px] items-center rounded-[3px] border border-[#ececec] bg-[#fafafa] pl-[5px] text-[#9a9a9a]"><svg class="mr-2 h-3 w-[11px]" viewBox="0 0 11 12"><path fill="#b0b0b0" d="M0 0l11 6-11 6z"/></svg>Start</button>
        <button class="flex h-6 w-[107px] items-center rounded-[3px] border border-[#d8d8d8] bg-[#f5f5f5] pl-[5px]"><svg class="mr-[7px] h-3 w-3 text-[#666]"><use href="#i-power"/></svg>Shutdown<i class="mx-1.5 h-4 w-px bg-[#d0d0d0]"></i><svg class="h-1.5 w-2.5 text-[#aaa]"><use href="#i-chev"/></svg></button>
        <button class="flex h-6 w-[74px] items-center rounded-[3px] border border-[#d8d8d8] bg-[#f5f5f5] pl-1"><svg class="mr-1.5 h-3.5 w-3.5 text-[#666]"><use href="#i-plane"/></svg>Migrate</button>
        <button class="flex h-6 w-[98px] items-center rounded-[3px] border border-[#d8d8d8] bg-[#f5f5f5] pl-1"><svg class="mr-1.5 h-2.5 w-3.5 text-[#666]"><use href="#i-term"/></svg>Console<i class="mr-1.5 ml-[7px] h-4 w-px bg-[#d0d0d0]"></i><svg class="h-1.5 w-2.5 text-[#aaa]"><use href="#i-chev"/></svg></button>
        <button class="flex h-6 w-[61px] items-center rounded-[3px] border border-[#d8d8d8] bg-[#f5f5f5] pl-2">More<svg class="ml-[7px] h-1.5 w-2.5 text-[#aaa]"><use href="#i-chev"/></svg></button>
        <button class="flex h-6 w-[59px] items-center rounded-[3px] border border-[#d8d8d8] bg-[#f5f5f5] pl-[5px]"><svg class="mr-[7px] h-3 w-3 text-[#666]"><use href="#i-help"/></svg>Help</button>
      </div>
    </div>
    <div class="flex min-h-0 flex-1">
      <nav class="flex w-[136px] shrink-0 flex-col gap-[5px] border-r border-[#cfcfcf] bg-[#f5f5f5] pt-[5px] text-[#222]" aria-label="Virtual machine">
        <a href="#" aria-current="page" class="flex h-6 items-center bg-[#c1dcf1] pl-2"><span class="mr-[7px] flex w-4 justify-center text-black"><svg class="h-3 w-3.5"><use href="#i-book"/></svg></span>Summary</a>
        <a href="#" class="flex h-6 items-center pl-2"><span class="mr-[7px] flex w-4 justify-center text-black"><svg class="h-2.5 w-3.5"><use href="#i-term"/></svg></span>Console</a>
        <a href="#" class="flex h-6 items-center pl-2"><span class="mr-[7px] flex w-4 justify-center text-black"><svg class="h-[15px] w-4"><use href="#i-desktop"/></svg></span>Hardware</a>
        <a href="#" class="flex h-6 items-center pl-2"><span class="mr-[7px] flex w-4 justify-center text-black"><svg class="h-3 w-4"><use href="#i-cloud"/></svg></span>Cloud-Init</a>
        <a href="#" class="flex h-6 items-center pl-2"><span class="mr-[7px] flex w-4 justify-center text-black"><svg class="h-3 w-3"><use href="#i-cog"/></svg></span>Options</a>
        <a href="#" class="flex h-6 items-center pl-2"><span class="mr-[7px] flex w-4 justify-center text-black"><svg class="h-3 w-3.5"><use href="#i-list"/></svg></span>Task History</a>
        <a href="#" class="flex h-6 items-center pl-2"><span class="mr-[7px] flex w-4 justify-center text-black"><svg class="h-2.5 w-3.5"><use href="#i-eye"/></svg></span>Monitor</a>
        <a href="#" class="flex h-6 items-center pl-2"><span class="mr-[7px] flex w-4 justify-center text-black"><svg class="h-3 w-3"><use href="#i-save"/></svg></span>Backup</a>
        <a href="#" class="flex h-6 items-center pl-2"><span class="mr-[7px] flex w-4 justify-center text-black"><svg class="h-[11px] w-[15px]"><use href="#i-retweet"/></svg></span>Replication</a>
        <a href="#" class="flex h-6 items-center pl-2"><span class="mr-[7px] flex w-4 justify-center text-black"><svg class="h-3 w-3"><use href="#i-history"/></svg></span>Snapshots</a>
        <a href="#" class="flex h-6 items-center pr-4 pl-2"><span class="mr-[7px] flex w-4 justify-center text-black"><svg class="h-3 w-3"><use href="#i-shield"/></svg></span>Firewall<svg class="ml-auto h-2 w-1.5" viewBox="0 0 6 8"><path fill="#c8c8c8" d="M0 0l6 4-6 4z"/></svg></a>
      </nav>
      <div class="flex min-w-0 flex-1 flex-col">
        <div class="flex h-[37px] shrink-0 items-center justify-end border-b border-[#cfcfcf] pr-[7px]">
          <div class="relative">
            <select aria-label="Time range" class="h-6 w-[170px] appearance-none border border-[#cfcfcf] bg-white pt-px pl-1.5 text-[13px] text-[#222]"><option>Hour (average)</option></select>
            <svg class="pointer-events-none absolute top-[9px] right-1.5 h-1.5 w-2.5 text-[#aaa]"><use href="#i-chev"/></svg>
          </div>
        </div>
        <div class="flex min-h-0 flex-1">
          <div class="grid min-w-0 flex-1 grid-cols-2 grid-rows-[320px_36px] gap-2.5 overflow-hidden p-2.5">
            <section class="flex flex-col">
              <h2 class="flex h-9 shrink-0 items-center bg-[#f5f5f5] pl-2.5 text-[15px] text-[#157fcc]">pee-clone2-158 (Uptime: 20:39:55)</h2>
              <div class="flex flex-1 flex-col border border-[#cfcfcf] px-[25px] pt-[19px]">
                <div class="flex h-[23px] items-center"><span class="mr-1 flex w-4 justify-center"><svg class="h-3 w-1.5"><use href="#i-info"/></svg></span>Status<span class="ml-auto">running</span></div>
                <div class="flex h-[23px] items-center"><span class="mr-1 flex w-4 justify-center"><svg class="h-3 w-3.5"><use href="#i-heart"/></svg></span>HA State<span class="ml-auto">none</span></div>
                <div class="flex h-[23px] items-center"><span class="mr-1 flex w-4 justify-center"><svg class="h-[13px] w-[11px]"><use href="#i-building"/></svg></span>Node<span class="ml-auto">pve081</span></div>
                <div class="mt-[17px] flex h-5 items-center"><svg class="mr-[5px] ml-[3px] h-4 w-4"><use href="#i-cpu"/></svg>CPU usage<span class="ml-auto">2.23% of 1 CPU(s)</span></div>
                <div class="h-[5px] bg-[#f5f5f5]"><div class="h-full bg-[#c1dcf1]" style="width:2.23%"></div></div>
                <div class="mt-[3px] flex h-5 items-center"><svg class="mr-[5px] ml-[3px] h-[9px] w-4"><use href="#i-mem"/></svg>Memory usage<span class="ml-auto">42.02% (860.53 MiB of 2.00 GiB)</span></div>
                <div class="h-[5px] bg-[#f5f5f5]"><div class="h-full bg-[#c1dcf1]" style="width:42.02%"></div></div>
                <div class="mt-[3px] flex h-5 items-center"><span class="mr-1 flex w-4 justify-center"><svg class="h-[11px] w-3 text-[#333]"><use href="#i-hdd"/></svg></span>Bootdisk size<span class="ml-auto">32.00 GiB</span></div>
                <div class="mt-[19px] flex items-start leading-[17px]"><svg class="mt-1 mr-1 h-2.5 w-[13px]"><use href="#i-exch"/></svg>IPs<span class="ml-auto text-right">172.31.1.28<br>2001:470:36:98:fccd:31ff:fec5:59bd</span></div>
                <button class="h-6 w-[45px] self-end rounded-[3px] border border-[#d8d8d8] bg-[#f5f5f5] text-[12px]">More</button>
              </div>
            </section>
            <section class="flex flex-col">
              <div class="flex h-9 shrink-0 items-center gap-1.5 bg-[#f5f5f5] pr-2.5 pl-2.5">
                <h2 class="text-[15px] text-[#157fcc]">Notes</h2>
                <button class="ml-auto" aria-label="Collapse notes"><svg class="h-4 w-4 text-[#3892d4]" viewBox="0 0 16 16"><path fill="none" stroke="currentColor" d="M6.500 4.300L10 8l-3.500 3.700"/><circle cx="8" cy="8" r="7.400" fill="none" stroke="currentColor"/></svg></button>
                <button aria-label="Edit notes"><svg class="h-4 w-4 text-[#6fa8dc]" viewBox="0 0 16 16"><circle cx="8" cy="8" r="2.700" fill="none" stroke="currentColor"/><path fill="none" stroke="currentColor" stroke-linejoin="round" d="M6.800.6h2.400l.5 2 1.300.5 1.800-1.100 1.700 1.700-1.100 1.800.5 1.300 2 .5v2l-2 .5-.5 1.300 1.100 1.800-1.700 1.700-1.800-1.100-1.300.5-.5 2H6.800l-.5-2-1.300-.5-1.800 1.100-1.700-1.700 1.100-1.800-.5-1.300-1.700-.5v-2l1.700-.5.5-1.300-1.100-1.800 1.700-1.700L5 3.100l1.300-.5z"/></svg></button>
              </div>
              <div class="flex-1 overflow-hidden border border-[#cfcfcf]">
                <svg class="h-[282px] w-[458px]" viewBox="0 0 458 282" role="img" aria-label="Clone 2"><g transform="translate(-45 74) scale(.342 .3333)" fill="none" stroke="#e81e1e" stroke-width="12" stroke-linecap="round" stroke-linejoin="round"><path d="M358 73C350 74 345 78 338 87C318 114 302 140 300 165C299 185 300 195 310 205C325 218 340 231 355 237H400"/><path d="M436 40L434 120L432 260"/><path d="M530 113C512 120 504 137 506 158C508 200 520 240 533 253C545 260 585 258 597 248C610 236 614 210 613 188C612 160 606 140 590 133C580 129 560 131 535 130"/><path d="M650 133V227M646 151H684C704 152 706 185 709 236"/><path d="M775 196C790 194 793 177 792 160C790 145 774 142 766 152C752 172 750 220 755 233C765 245 785 242 806 248"/><path d="M945 180C936 168 967 134 993 132C1019 132 1018 160 1017 185C1014 225 989 253 957 274H1053"/></g></svg>
              </div>
            </section>
            <section class="col-span-2 flex h-9 items-center bg-[#f5f5f5] pr-2.5 pb-0.5 pl-2.5">
              <h2 class="text-[15px] text-[#157fcc]">CPU usage</h2>
              <button class="ml-auto flex h-[25px] w-[102px] items-center rounded-[3px] border border-[#cfcfcf] bg-white pl-[7px] text-[#333]"><i class="mr-[7px] h-2.5 w-2.5 rounded-full border border-[#7f9a10] bg-[#94ae0a]"></i>CPU usage</button>
              <button class="ml-[7px] bg-[#fafafa]" aria-label="Zoom out"><svg class="h-4 w-4" viewBox="0 0 16 16"><circle cx="8" cy="8" r="7.400" fill="none" stroke="#cfe1f1"/><path stroke="#cfe1f1" d="M3.500 8h9"/></svg></button>
            </section>
          </div>
          <div class="flex w-4 shrink-0 flex-col items-center bg-[#f1f1f1] py-[7px]">
            <svg class="h-1 w-2 shrink-0 text-[#a3a3a3]"><use href="#i-up"/></svg>
            <div class="mt-1.5 h-[76px] w-3 bg-[#c1c1c1]"></div>
            <svg class="mt-auto h-1 w-2 shrink-0 text-[#505050]"><use href="#i-down"/></svg>
          </div>
        </div>
      </div>
    </div>
  </main>
</div>

<!-- Splitter -->
<div class="flex h-[5px] shrink-0 justify-center"><button class="flex h-[5px] w-12 items-center justify-center bg-[#e2e2e2]" aria-label="Collapse log panel"><svg class="h-1 w-2" viewBox="0 0 8 4"><path fill="none" stroke="#999" d="M1 .5l3 3 3-3"/></svg></button></div>

<!-- Task log -->
<section class="mr-1.5 ml-[5px] h-[166px] shrink-0 overflow-hidden bg-[#f5f5f5]">
  <div class="flex h-9 items-center gap-[11px] border-b border-[#cfcfcf] pl-[11px]" role="tablist">
    <button role="tab" aria-selected="true" class="h-[23px] rounded-[2px] bg-[#3892d4] px-[7px] text-white">Tasks</button>
    <button role="tab" aria-selected="false" class="h-[23px] px-[7px] text-[#222]">Cluster log</button>
  </div>
  <table class="ml-px w-full table-fixed border-separate border-spacing-0 bg-white text-left">
    <colgroup><col class="w-[150px]"><col class="w-[150px]"><col class="w-[100px]"><col class="w-[150px]"><col><col class="w-[200px]"><col class="w-[18px]"></colgroup>
    <thead class="text-[#666]">
      <tr class="h-[30px]">
        <th scope="col" aria-sort="descending" class="border-r border-b border-[#cfcfcf] bg-[#eef5fc] px-2.5 py-0 font-normal"><span class="flex items-center gap-1">Start Time<svg class="h-3.5 w-2.5" viewBox="0 0 10 14"><path fill="none" stroke="#999" d="M5 0v13M.7 9L5 13.300 9.300 9"/></svg></span></th>
        <th scope="col" class="border-r border-b border-[#cfcfcf] px-2.5 py-0 font-normal">End Time</th>
        <th scope="col" class="border-r border-b border-[#cfcfcf] px-2.5 py-0 font-normal">Node</th>
        <th scope="col" class="border-r border-b border-[#cfcfcf] px-2.5 py-0 font-normal">User name</th>
        <th scope="col" class="border-r border-b border-[#cfcfcf] px-2.5 py-0 font-normal">Description</th>
        <th scope="col" class="border-r border-b border-[#cfcfcf] px-2.5 py-0 font-normal">Status</th>
        <td class="border-b border-[#cfcfcf] p-0"></td>
      </tr>
    </thead>
    <tbody class="[&_td]:border-[#cfcfcf] [&_td]:whitespace-nowrap">
      <tr class="h-[26px]"><td class="border-b px-2.5 pt-0.5 pb-0">Dec 18 08:55:52</td><td class="border-b px-2.5 py-0"><svg class="mx-auto h-[15px] w-4" role="img" aria-label="Running"><use href="#i-desktop"/></svg></td><td class="border-b px-2.5 pt-0.5 pb-0">pve084</td><td class="border-b px-2.5 pt-0.5 pb-0">spcn27@pve</td><td class="border-b px-2.5 pt-0.5 pb-0">VM/CT 158 - Console</td><td class="border-b px-2.5 py-0"></td>
        <td rowspan="4" class="p-0 align-top"><div class="flex h-[100px] w-[17px] flex-col items-center bg-[#f1f1f1] py-[7px]"><svg class="h-1 w-2 shrink-0 text-[#a3a3a3]"><use href="#i-up"/></svg><div class="mt-1.5 h-11 w-[13px] bg-[#c1c1c1]"></div><svg class="mt-auto h-1 w-2 shrink-0 text-[#505050]"><use href="#i-down"/></svg></div></td></tr>
      <tr class="h-[25px] bg-[#fafafa]"><td class="border-b px-2.5 pt-0.5 pb-0">Dec 18 08:33:57</td><td class="border-b px-2.5 py-0"><svg class="mx-auto h-[15px] w-4" role="img" aria-label="Running"><use href="#i-desktop"/></svg></td><td class="border-b px-2.5 pt-0.5 pb-0">pve084</td><td class="border-b px-2.5 pt-0.5 pb-0">spcn27@pve</td><td class="border-b px-2.5 pt-0.5 pb-0">VM/CT 157 - Console</td><td class="border-b px-2.5 py-0"></td></tr>
      <tr class="h-[25px]"><td class="border-b px-2.5 pt-0.5 pb-0">Dec 18 09:33:42</td><td class="border-b px-2.5 pt-0.5 pb-0">Dec 18 09:33:44</td><td class="border-b px-2.5 pt-0.5 pb-0">pve084</td><td class="border-b px-2.5 pt-0.5 pb-0">spcn27@pve</td><td class="border-b px-2.5 pt-0.5 pb-0">VM/CT 158 - Console</td><td class="border-b px-2.5 pt-0.5 pb-0">OK</td></tr>
      <tr class="h-6 bg-[#f3d6d7]"><td class="px-2.5 pt-0.5 pb-0">Dec 18 08:33:55</td><td class="px-2.5 pt-0.5 pb-0">Dec 18 08:33:55</td><td class="px-2.5 pt-0.5 pb-0">pve081</td><td class="px-2.5 pt-0.5 pb-0">spcn27@pve</td><td class="px-2.5 pt-0.5 pb-0">VM 157 - Start</td><td class="px-2.5 pt-0.5 pb-0">Error: VM 157 already running</td></tr>
    </tbody>
  </table>
</section>

<!-- Windows taskbar -->
<footer class="mt-1.5 flex h-10 shrink-0 bg-[#3a403b] font-['Open_Sans','Noto_Sans',sans-serif] text-[12px] text-white">
  <button class="flex w-12 items-center justify-center" aria-label="Start"><svg class="h-4 w-4" viewBox="0 0 16 16"><path fill="#fff" d="M0 2.200L6.700 1.300v6.300H0zM7.500 1.200L16 0v7.600H7.500zM0 8.400h6.700v6.300L0 13.800zM7.500 8.400H16V16l-8.500-1.200z"/></svg></button>
  <button class="flex w-12 items-center justify-center" aria-label="Search"><svg class="h-4 w-4" viewBox="0 0 16 16"><circle cx="10" cy="6" r="5.300" fill="none" stroke="#fff" stroke-width="1.200"/><path stroke="#fff" stroke-width="1.200" d="M6.200 9.800L.5 15.500"/></svg></button>
  <button class="flex w-12 items-center justify-center" aria-label="Task view"><svg class="h-4 w-4" viewBox="0 0 16 16"><path fill="none" stroke="#fff" d="M.5 0v2.500h10V0M.5 5h10v6H.5zM.5 16v-2.500h10V16M14 0v4M14 8v8"/><path fill="#fff" d="M12.500 4.500h3v2.500h-3z"/></svg></button>
  <div class="ml-[3px] flex">
    <button class="flex w-[49px] flex-col items-center" aria-label="Snipping Tool"><svg class="mt-2 h-6 w-6" viewBox="0 0 24 24"><path fill="none" stroke="#d83b14" stroke-width="3.500" d="M6 3q10-3 14 5 1 7-5 9"/><path fill="#d4d8dc" d="M10 2l2-1 2 16-2 1zM5 8l3-1 8 10-3 1z"/><circle cx="5" cy="18" r="2.800" fill="none" stroke="#1a86d8" stroke-width="2"/><circle cx="12" cy="21" r="2.300" fill="none" stroke="#1a86d8" stroke-width="2"/></svg><i class="mt-auto h-0.5 w-10 bg-[#76b9ed]"></i></button>
    <button class="flex w-[49px] items-center justify-center" aria-label="Phone Link, 9 notifications"><span class="relative ml-2 block h-6 w-8"><svg class="h-[22px] w-[22px]" viewBox="0 0 22 22"><path fill="#0f5fa8" d="M6 0h15v16H6z"/><path fill="#1682d4" d="M0 1h6v14H0z"/><rect x="4" y="1" width="11" height="20" rx="1.500" fill="#2cb4ea"/><path stroke="#bfeaff" d="M7 4h5"/></svg><span class="absolute top-2.5 left-4 flex h-4 w-4 items-center justify-center rounded-full border border-[#aaa] bg-[#2e3330] text-[11px]">9</span></span></button>
    <button class="flex w-[49px] items-center justify-center" aria-label="Chrome"><svg class="h-6 w-6" viewBox="0 0 24 24"><circle cx="12" cy="12" r="12" fill="#fcc934"/><path fill="#e33b2e" d="M1.600 6A12 12 0 0122.400 6H12a6 6 0 00-5.200 9z"/><path fill="#1e9a4d" d="M1.600 6l5.200 9A6 6 0 0012 18l2.800-.7L11 24A12 12 0 011.600 6z"/><circle cx="12" cy="12" r="5.800" fill="#fff"/><circle cx="12" cy="12" r="4.500" fill="#2c7be5"/></svg></button>
    <button class="flex w-[49px] flex-col items-center" aria-label="Sticky Notes"><svg class="mt-[9px] h-[22px] w-[22px]" viewBox="0 0 22 22"><path fill="#ffd60a" d="M0 0h22v11L11 22H0z"/><path fill="#46452f" d="M11 11h11L11 22z"/><path fill="#e8b406" d="M22 11v11H11z"/></svg><i class="mt-auto h-0.5 w-10 bg-[#76b9ed]"></i></button>
    <button class="flex w-[49px] items-center justify-center" aria-label="Control Panel"><svg class="h-4 w-[22px]" viewBox="0 0 22 16"><rect width="22" height="16" rx="1" fill="#45b4ec"/><path fill="#bfe6fa" d="M1 1h20v11H1z"/><circle cx="7" cy="7" r="4" fill="#1b78c8"/><path fill="#f5b21c" d="M7 3a4 4 0 014 4H7z"/><path stroke="#1b78c8" stroke-width="1.500" d="M13 4h6M13 7h6M13 10h6"/><circle cx="6" cy="14" r="1" fill="#fff"/></svg></button>
    <button class="flex w-[49px] items-center justify-center" aria-label="File Explorer"><svg class="h-[18px] w-[22px]" viewBox="0 0 22 18"><path fill="#e8a317" d="M0 0h9l2 2h11v4H0z"/><path fill="#fdd667" d="M0 4h22v13H0z"/><path fill="#3a90d8" d="M4 18v-7h14v7h-4v-3.500H8V18z"/></svg></button>
    <button class="flex w-[49px] items-center justify-center" aria-label="Microsoft Store"><svg class="h-[23px] w-[22px]" viewBox="0 0 22 23"><path fill="none" stroke="#1fa8e8" stroke-width="2" d="M6 5V1h10v4"/><path fill="#f3f3f3" d="M0 4.500h22V20q0 3-3 3H3q-3 0-3-3z"/><path fill="#f0481f" d="M6 9h4.500v4.500H6z"/><path fill="#7fba00" d="M11.500 9H16v4.500h-4.500z"/><path fill="#1fa0ea" d="M6 14.500h4.500V19H6z"/><path fill="#ffb900" d="M11.500 14.500H16V19h-4.500z"/></svg></button>
    <button class="flex w-[49px] items-center justify-center" aria-label="Mail"><svg class="h-[22px] w-6" viewBox="0 0 24 22"><path fill="#1560a8" d="M0 8l12-8 12 8v3H0z"/><path fill="#f5f5f5" d="M2 7h20v8H2z"/><path fill="#1b94e4" d="M0 8l12 8 12-8v14H0z"/><path fill="#38b6f6" d="M0 8l18 14H0z"/></svg></button>
    <button class="flex w-[49px] items-center justify-center" aria-label="Roblox"><svg class="h-[22px] w-[22px]" viewBox="0 0 22 22"><path fill="#d2d5d8" fill-rule="evenodd" d="M4.500 0L22 4.500 17.500 22 0 17.500zM9 8L8 13l5 1.200 1.200-5z"/></svg></button>
    <button class="flex w-[49px] flex-col items-center" aria-label="Steam"><svg class="mt-2 h-[23px] w-[23px]" viewBox="0 0 23 23"><circle cx="11.500" cy="11.500" r="11.500" fill="#123a6a"/><path fill="#1b74b4" d="M2 18a11.500 11.500 0 0020-2L12 14z"/><circle cx="15" cy="8.500" r="3.700" fill="none" stroke="#fff" stroke-width="1.800"/><path fill="#fff" d="M0 12l7 2.500 5-4 3 3-5 3.500q0 3-3 3T3.500 17L.5 15.500z"/></svg><i class="mt-auto h-0.5 w-10 bg-[#76b9ed]"></i></button>
    <button class="flex w-[49px] flex-col items-center border-r-[3px] border-[#4c514d] bg-[#646a65]" aria-label="Edge"><svg class="mt-2 h-6 w-6" viewBox="0 0 24 24"><circle cx="12" cy="12" r="12" fill="#1683d2"/><path fill="#3cc6c0" d="M1 8Q4 0 12 0q11 0 12 10 0 6-6 6h-4q3-3 0-6-5-4-13 1z"/><path fill="#5bd05e" d="M15 .4Q24 3 24 11q-1 5-6 5h-4q2-2 1.500-4z"/><path fill="#0f59a6" d="M9 10q-4 8 4 11 5 1 9-2.500Q18 24 12 24 4 23 4 16q0-5 5-6z"/><path fill="#646a65" d="M14 10q3 3 0 5.500Q15 18 19 18q3 0 4-1-2 2.500-6 2.500-7-.5-6-6Q12 11 14 10z"/></svg><i class="mt-auto h-0.5 w-full bg-[#76b9ed]"></i></button>
    <button class="flex w-[49px] flex-col items-center" aria-label="Teams"><svg class="mt-2 h-6 w-6" viewBox="0 0 24 24"><circle cx="13" cy="4" r="3.500" fill="#6b74d8"/><circle cx="20.500" cy="5" r="2.500" fill="#5059c9"/><path fill="#5059c9" d="M16 9h8v7q-1 4-5 4z"/><path fill="#7b83eb" d="M7 9h12v8q-1 6-6 6t-6-6z"/><rect y="6" width="12" height="12" rx="1" fill="#4b53bc"/><path stroke="#fff" stroke-width="1.600" d="M3 9h6M6 9v6.500"/><circle cx="20" cy="19.500" r="4.500" fill="#92c353" stroke="#fff"/><path fill="none" stroke="#fff" stroke-width="1.200" d="M18 19.500l1.500 1.500 2.500-3"/></svg><i class="mt-auto h-0.5 w-10 bg-[#76b9ed]"></i></button>
    <button class="flex w-12 flex-col items-center bg-[#b06c33]" aria-label="LINE"><span class="mt-2 flex h-6 w-6 items-center justify-center rounded-[4px] bg-[#00b900]"><span class="flex h-4 w-5 items-center justify-center rounded-full bg-white text-[6px] leading-none font-bold text-[#00a000]">LINE</span></span><i class="mt-auto h-0.5 w-full bg-[#ff7700]"></i></button>
    <button class="flex w-[49px] flex-col items-center" aria-label="GitHub Desktop"><span class="mt-2 flex h-[22px] w-[22px] items-center justify-center rounded-full bg-[#7b2aa5]"><svg class="h-4 w-4 text-white"><use href="#i-gh"/></svg></span><i class="mt-auto h-0.5 w-10 bg-[#76b9ed]"></i></button>
    <button class="flex w-[49px] flex-col items-center" aria-label="Visual Studio Code"><svg class="mt-2 h-6 w-6" viewBox="0 0 24 24"><path fill="#1f8ad2" d="M17.500 0L24 3v18l-6.500 3L5 12z"/><path fill="#3a403b" d="M18 6.500v11L10.500 12z"/><path fill="#0a70b8" d="M2 6.500L0 8.500 17.500 24l1-6.500z"/><path fill="#2aa0ea" d="M2 17.500L0 15.500 17.500 0v6.500z"/><path fill="#3aa9f0" d="M17.500 0L24 3v18l-6.500 3z"/></svg><i class="mt-auto h-0.5 w-10 bg-[#76b9ed]"></i></button>
  </div>
  <div class="ml-auto flex items-center whitespace-nowrap">
    <button class="flex items-center gap-2.5"><i class="h-5 w-5 rounded-full bg-linear-to-br from-[#ffc83a] to-[#f4650c]"></i><span class="text-[13px]">24°C&nbsp; มีแดด</span></button>
    <button class="ml-6 flex" aria-label="Show hidden icons"><svg class="h-2 w-3" viewBox="0 0 12 8"><path fill="none" stroke="#fff" stroke-width="1.200" d="M.6 6.800L6 1.300l5.400 5.500"/></svg></button>
    <button class="ml-3">ENG</button>
    <div class="ml-2.5 w-[58px] text-center text-[11px] leading-[18px]">9:37 AM<br>12/18/2022</div>
    <button class="relative ml-[15px] h-6 w-6" aria-label="2 new notifications"><svg class="h-4 w-4" viewBox="0 0 16 16"><path fill="#fff" d="M0 0h16v12H6l-3 3v-3H0z"/><path stroke="#3a403b" d="M3 3.500h10M3 6h10M3 8.500h7"/></svg><span class="absolute top-2 left-2 flex h-4 w-4 items-center justify-center rounded-full border border-[#888] bg-[#3a403b] text-[11px]">2</span></button>
    <i class="ml-3 h-10 w-[5px] border-l border-[#7a7e7b]"></i>
  </div>
</footer>
</body>
</html>
